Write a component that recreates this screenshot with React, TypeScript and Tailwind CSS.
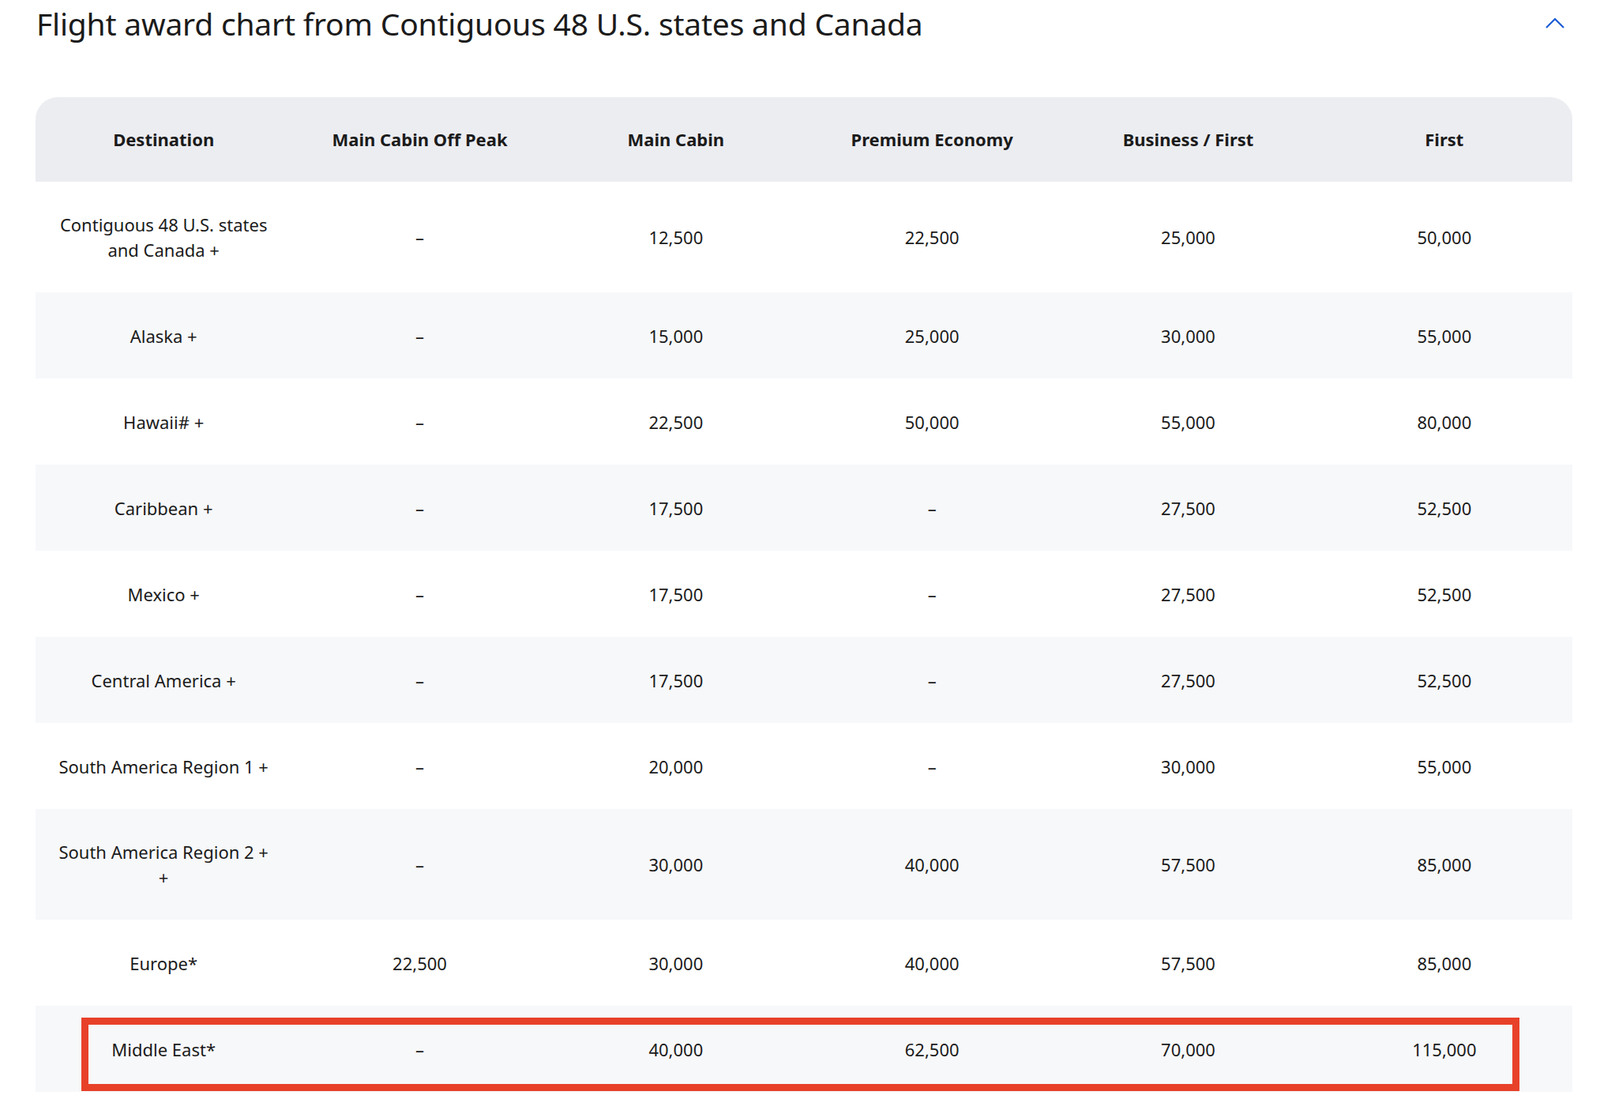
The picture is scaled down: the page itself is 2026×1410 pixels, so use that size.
const headers = ["Destination", "Main Cabin Off Peak", "Main Cabin", "Premium Economy", "Business / First", "First"];

const rows: { cells: string[]; tall?: boolean }[] = [
  { cells: ["Contiguous 48 U.S. states and Canada +", "–", "12,500", "22,500", "25,000", "50,000"], tall: true },
  { cells: ["Alaska +", "–", "15,000", "25,000", "30,000", "55,000"] },
  { cells: ["Hawaii# +", "–", "22,500", "50,000", "55,000", "80,000"] },
  { cells: ["Caribbean +", "–", "17,500", "–", "27,500", "52,500"] },
  { cells: ["Mexico +", "–", "17,500", "–", "27,500", "52,500"] },
  { cells: ["Central America +", "–", "17,500", "–", "27,500", "52,500"] },
  { cells: ["South America Region 1 +", "–", "20,000", "–", "30,000", "55,000"] },
  { cells: ["South America Region 2 + +", "–", "30,000", "40,000", "57,500", "85,000"], tall: true },
  { cells: ["Europe*", "22,500", "30,000", "40,000", "57,500", "85,000"] },
  { cells: ["Middle East*", "–", "40,000", "62,500", "70,000", "115,000"] },
];

export default function App() {
  return (
    <div className="w-[2026px] h-[1410px] overflow-hidden bg-white text-[#1b1b1b] font-['Lato','Open_Sans',sans-serif]">
      <div className="flex items-center justify-between pl-[46px] pr-[44px] h-[58px]">
        <h1 className="text-[39px] leading-none tracking-[-0.2px]">Flight award chart from Contiguous 48 U.S. states and Canada</h1>
        <svg width="26" height="16" viewBox="0 0 26 16" fill="none" stroke="#1a5bd6" strokeWidth="2.2">
          <path d="M2 14 L13 3 L24 14" />
        </svg>
      </div>
      <div className="mt-[65px] mx-[45px] w-[1946px]">
        <div className="grid grid-cols-6 h-[107px] items-center bg-[#ecedf1] rounded-tl-[28px] rounded-tr-[28px] text-[22px] font-bold">
          {headers.map((h) => (
            <div key={h} className="text-center">{h}</div>
          ))}
        </div>
        {rows.map((r, i) => (
          <div
            key={i}
            className={`relative grid grid-cols-6 items-center text-[22px] ${r.tall ? "h-[140px]" : "h-[109px]"} ${i % 2 === 1 ? "bg-[#f7f8fa]" : "bg-white"}`}
          >
            {r.cells.map((c, j) => (
              <div key={j} className={`text-center leading-[32px] ${j === 0 ? "px-[24px]" : ""}`}>{c}</div>
            ))}
            {i === rows.length - 1 && (
              <div className="absolute top-[15px] bottom-[1px] left-[58px] right-[67px] border-[9px] border-[#e8412a]" />
            )}
          </div>
        ))}
      </div>
    </div>
  );
}
